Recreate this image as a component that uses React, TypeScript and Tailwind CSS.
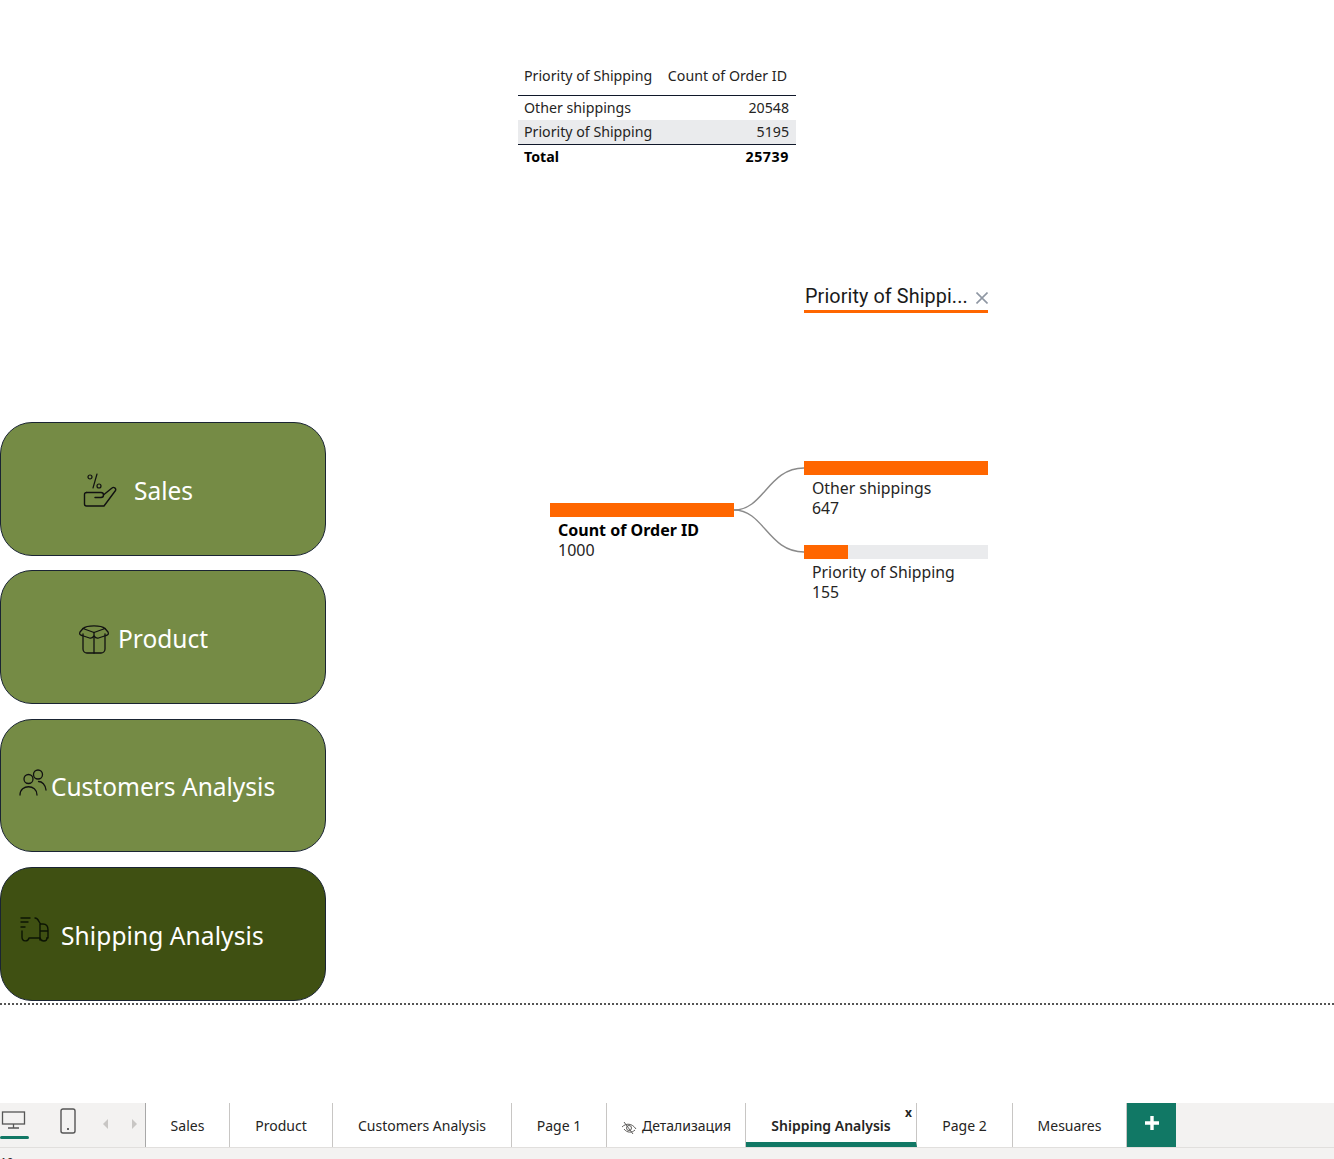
const font = "font-['Noto_Sans','Open_Sans',sans-serif]";

const SalesIcon = () => (
  <svg width="36" height="36" viewBox="0 0 36 36" fill="none" stroke="#111" strokeWidth="1.4" strokeLinecap="round" strokeLinejoin="round" className="mt-[4px] shrink-0">
    <path d="M16 1 L12 15" strokeWidth="1.2" />
    <circle cx="9" cy="4" r="2" strokeWidth="1.2" />
    <circle cx="18" cy="13" r="2" strokeWidth="1.2" />
    <path d="M5.5 19.5 H20 a2.5 2.5 0 0 1 2.5 2.5 a2.5 2.5 0 0 1-2.5 2.5 H14" />
    <path d="M23 21.5 L31 15 a2.2 2.2 0 0 1 3.5 2.5 L23 33 H5.5 a2 2 0 0 1-2-2 V21.5 a2 2 0 0 1 2-2" />
  </svg>
);

const BoxIcon = () => (
  <svg width="32" height="32" viewBox="0 0 32 32" fill="none" stroke="#111" strokeWidth="1.3" strokeLinecap="round" strokeLinejoin="round" className="mt-[4px] shrink-0">
    <path d="M5 11 V26 a4 4 0 0 0 4 4 H23 a4 4 0 0 0 4-4 V11" />
    <path d="M16 14 V30" />
    <path d="M5 5.5 C9 2 23 2 27 5.5 L16 9.5 Z" />
    <path d="M5 5.5 L2 9 C1 11 2 12 4 12.5 L11.5 15 C13 15.5 14.5 15 16 13 L16 9.5" />
    <path d="M27 5.5 L30 9 C31 11 30 12 28 12.5 L20.5 15 C19 15.5 17.5 15 16 13" />
  </svg>
);

const PeopleIcon = () => (
  <svg width="30" height="30" viewBox="0 0 30 30" fill="none" stroke="#111" strokeWidth="1.3" strokeLinecap="round" className="mb-[6px] shrink-0">
    <circle cx="10.5" cy="11" r="4.5" />
    <circle cx="20" cy="6.5" r="4.5" />
    <path d="M2 27 C2 16 19 16 19 27" />
    <path d="M20.5 13.5 C24 13.5 27.5 16.5 28 22" />
  </svg>
);

const TruckIcon = () => (
  <svg width="32" height="30" viewBox="0 0 32 30" fill="none" stroke="#0c1404" strokeWidth="1.4" strokeLinecap="round" strokeLinejoin="round" className="mb-[6px] shrink-0">
    <path d="M1 2 H10 M1 6 H8 M1 11 H5" />
    <path d="M15 2 C19 2 19 8 21 8 H23 C27 8 28 11 28 14 V22 H27 M20 8 V24 M20 15 H28" />
    <path d="M2 15 V21 C2 26 8 26 9 22 H20 C21 26 27 26 27 22" />
  </svg>
);

const NavButton = ({
  label,
  icon,
  dark,
  className,
  labelClassName,
}: {
  label: string;
  icon: React.ReactNode;
  dark?: boolean;
  className: string;
  labelClassName: string;
}) => (
  <div
    className={`flex w-[326px] items-center rounded-[32px] border border-[#1a2433] text-[24.5px] text-white ${
      dark ? "bg-[#3f5012]" : "bg-[#758b45]"
    } ${className}`}
  >
    {icon}
    <span className={labelClassName}>{label}</span>
  </div>
);

const tabs = [
  { label: "Sales", width: "w-[84px]" },
  { label: "Product", width: "w-[103px]" },
  { label: "Customers Analysis", width: "w-[179px]" },
  { label: "Page 1", width: "w-[95px]" },
  { label: "Детализация", width: "w-[139px]", hidden: true },
  { label: "Shipping Analysis", width: "w-[171px]", active: true },
  { label: "Page 2", width: "w-[96px]" },
  { label: "Mesuares", width: "w-[114px]" },
];

const Tabs = () => (
  <div className="flex h-[44px] bg-[#f3f2f1]">
    <div className="flex w-[146px] shrink-0 border-r border-[#a8a8a8]">
      <div className="flex w-[29px] flex-col items-center border-b-[3px] border-transparent">
        <svg width="26" height="20" viewBox="0 0 26 20" fill="none" stroke="#555" strokeWidth="1.3" className="-ml-[2px] mt-[7px]">
          <rect x="1.5" y="2" width="22" height="12" />
          <path d="M12.5 14 V18 M7 18 H18" />
        </svg>
        <div className="mt-[6px] h-[3px] w-full rounded-sm bg-[#117865]" />
      </div>
      <svg width="18" height="26" viewBox="0 0 18 26" fill="none" stroke="#555" strokeWidth="1.4" className="ml-[30px] mt-[5px]">
        <rect x="2" y="1" width="14" height="24" rx="2" />
        <path d="M8 21 H10" stroke="#333" />
      </svg>
      <svg width="10" height="12" viewBox="0 0 10 12" className="ml-[24px] mt-[15px]">
        <path d="M7 1 L2 6 L7 11 Z" fill="#c8c6c4" />
      </svg>
      <svg width="10" height="12" viewBox="0 0 10 12" className="ml-[18px] mt-[15px]">
        <path d="M3 1 L8 6 L3 11 Z" fill="#c8c6c4" />
      </svg>
    </div>
    {tabs.map((tab) => (
      <div
        key={tab.label}
        className={`relative flex shrink-0 items-center justify-center border-r border-[#c8c6c4] bg-white text-[14px] text-[#252423] ${tab.width} ${
          tab.active ? "border-b-[5px] border-b-[#117865] pt-[5px] font-semibold" : ""
        }`}
      >
        {tab.hidden && (
          <svg width="16" height="14" viewBox="0 0 16 14" fill="none" stroke="#605e5c" strokeWidth="1" className="mr-[5px] mt-[5px]">
            <path d="M1 6 C5 2 11 2 15 8 M3 8 C6 12 11 12 14 9 M3 1 L12 13" />
            <circle cx="8" cy="7" r="2.5" />
          </svg>
        )}
        {tab.label}
        {tab.active && (
          <span className="absolute right-[4px] top-[1px] text-[12px] font-bold leading-[18px]">x</span>
        )}
      </div>
    ))}
    <div className="flex w-[49px] shrink-0 items-center justify-center bg-[#117865]">
      <svg width="14" height="14" viewBox="0 0 14 14" className="mb-[4px]">
        <path d="M7 0 V14 M0 7 H14" stroke="#fff" strokeWidth="3.4" />
      </svg>
    </div>
  </div>
);

const Table = () => (
  <div className="ml-[192px] mt-[60px] w-[278px] text-[14.2px] text-[#252423]">
    <div className="flex h-[36px] items-center justify-between border-b border-[#10182a] pb-[3px] pl-[6px] pr-[9px]">
      <span>Priority of Shipping</span>
      <span>Count of Order ID</span>
    </div>
    <div className="flex h-[24px] items-center justify-between pl-[6px] pr-[7px]">
      <span>Other shippings</span>
      <span>20548</span>
    </div>
    <div className="flex h-[25px] items-center justify-between border-b border-[#10182a] bg-[#eaebed] pl-[6px] pr-[7px]">
      <span>Priority of Shipping</span>
      <span>5195</span>
    </div>
    <div className="flex h-[23px] items-center justify-between pl-[6px] pr-[7px] font-bold text-black">
      <span>Total</span>
      <span className="tracking-[0.6px]">25739</span>
    </div>
  </div>
);

const Tree = () => (
  <div className="ml-[224px] mt-[117px] flex text-[#252423]">
    <div className="mt-[218px] w-[184px]">
      <div className="h-[14px] bg-[#ff6600]" />
      <div className="mt-[3px] pl-[8px] text-[16px] leading-[20px]">
        <div className="font-bold text-black">Count of Order ID</div>
        <div>1000</div>
      </div>
    </div>
    <svg width="70" height="100" viewBox="0 0 70 100" fill="none" stroke="#8a8a8a" strokeWidth="1.4" className="mt-[176px] shrink-0">
      <path d="M0 49 C30 49 34 7 70 7" />
      <path d="M0 49 C30 49 34 91 70 91" />
    </svg>
    <div className="w-[184px]">
      <div className="flex h-[28px] items-center justify-between border-b-[3px] border-[#ff6600] pb-[2px] pl-px">
        <span className="font-['Roboto',sans-serif] text-[19.8px] leading-[24px] tracking-[0.1px] text-[#1a1a1a]">Priority of Shippi...</span>
        <svg width="12" height="12" viewBox="0 0 12 12" stroke="#8f97a3" strokeWidth="1.6" className="mt-[2px]">
          <path d="M0.5 0.5 L11.5 11.5 M11.5 0.5 L0.5 11.5" />
        </svg>
      </div>
      <div className="mt-[148px] h-[14px] bg-[#ff6600]" />
      <div className="mt-[3px] pl-[8px] text-[15.8px] leading-[20px]">
        <div>Other shippings</div>
        <div>647</div>
      </div>
      <div className="mt-[27px] h-[14px] bg-[#eaebed]">
        <div className="h-full w-[44px] bg-[#ff6600]" />
      </div>
      <div className="mt-[3px] pl-[8px] text-[15.8px] leading-[20px]">
        <div>Priority of Shipping</div>
        <div>155</div>
      </div>
    </div>
  </div>
);

export default function App() {
  return (
    <div className={`flex h-[1159px] w-[1334px] flex-col overflow-hidden bg-white ${font}`}>
      <div className="flex h-[1005px] shrink-0 border-b-2 border-dotted border-[#555]">
        <div className="flex w-[326px] shrink-0 flex-col pt-[422px]">
          <NavButton
            label="Sales"
            className="h-[134px] pl-[80px]"
            labelClassName="ml-[17px] mt-[4px]"
            icon={<SalesIcon />}
          />
          <NavButton
            label="Product"
            className="mt-[14px] h-[134px] pl-[77px]"
            labelClassName="ml-[8px] mt-[4px]"
            icon={<BoxIcon />}
          />
          <NavButton
            label="Customers Analysis"
            className="mt-[15px] h-[133px] pl-[17px]"
            labelClassName="ml-[3px] mt-[4px]"
            icon={<PeopleIcon />}
          />
          <NavButton
            dark
            label="Shipping Analysis"
            className="mt-[15px] h-[134px] pl-[19px]"
            labelClassName="ml-[9px] mt-[4px] tracking-[0.1px]"
            icon={<TruckIcon />}
          />
        </div>
        <div>
          <Table />
          <Tree />
        </div>
      </div>
      <div className="h-[98px] shrink-0" />
      <Tabs />
      <div className="h-[12px] overflow-hidden border-t border-[#e1dfdd] bg-[#f3f2f1] pt-[7px] text-[12px] leading-[16px] text-[#252423]">
        10
      </div>
    </div>
  );
}
